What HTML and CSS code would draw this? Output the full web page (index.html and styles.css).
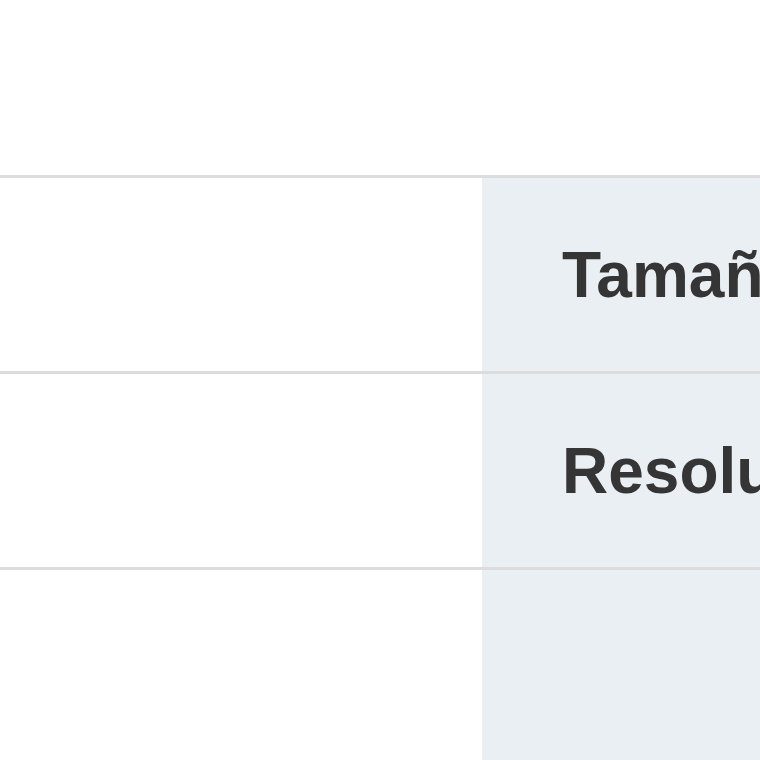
FILE: index.html
```html
<!DOCTYPE html>
<html lang="es">
<head>
<meta charset="utf-8">
<title>Tabla</title>
<link rel="stylesheet" href="styles.css">
</head>
<body>
<div class="page">
  <table class="specs">
    <tbody>
      <tr>
        <td class="blank"></td>
        <th class="label">Tamaño</th>
      </tr>
      <tr>
        <td class="blank"></td>
        <th class="label">Resolución</th>
      </tr>
      <tr>
        <td class="blank"></td>
        <th class="label"></th>
      </tr>
    </tbody>
  </table>
</div>
</body>
</html>
```

FILE: styles.css
```css
html, body {
  margin: 0;
  padding: 0;
  background: #ffffff;
  overflow: hidden;
}

.page {
  width: 760px;
  height: 760px;
  overflow: hidden;
  padding-top: 175px;
  box-sizing: border-box;
}

.specs {
  border-collapse: collapse;
  width: 1100px;
  table-layout: fixed;
  border-top: 3px solid #dcdcdc;
}

.specs tr {
  height: 196px;
  border-bottom: 3px solid #dcdcdc;
}

.blank {
  width: 482px;
  padding: 0;
  background: #ffffff;
}

.label {
  background: #eaeff4;
  padding: 0 0 0 80px;
  text-align: left;
  vertical-align: middle;
  font-family: "Liberation Sans", Arial, sans-serif;
  font-weight: bold;
  font-size: 64px;
  color: #353535;
  white-space: nowrap;
}
```
